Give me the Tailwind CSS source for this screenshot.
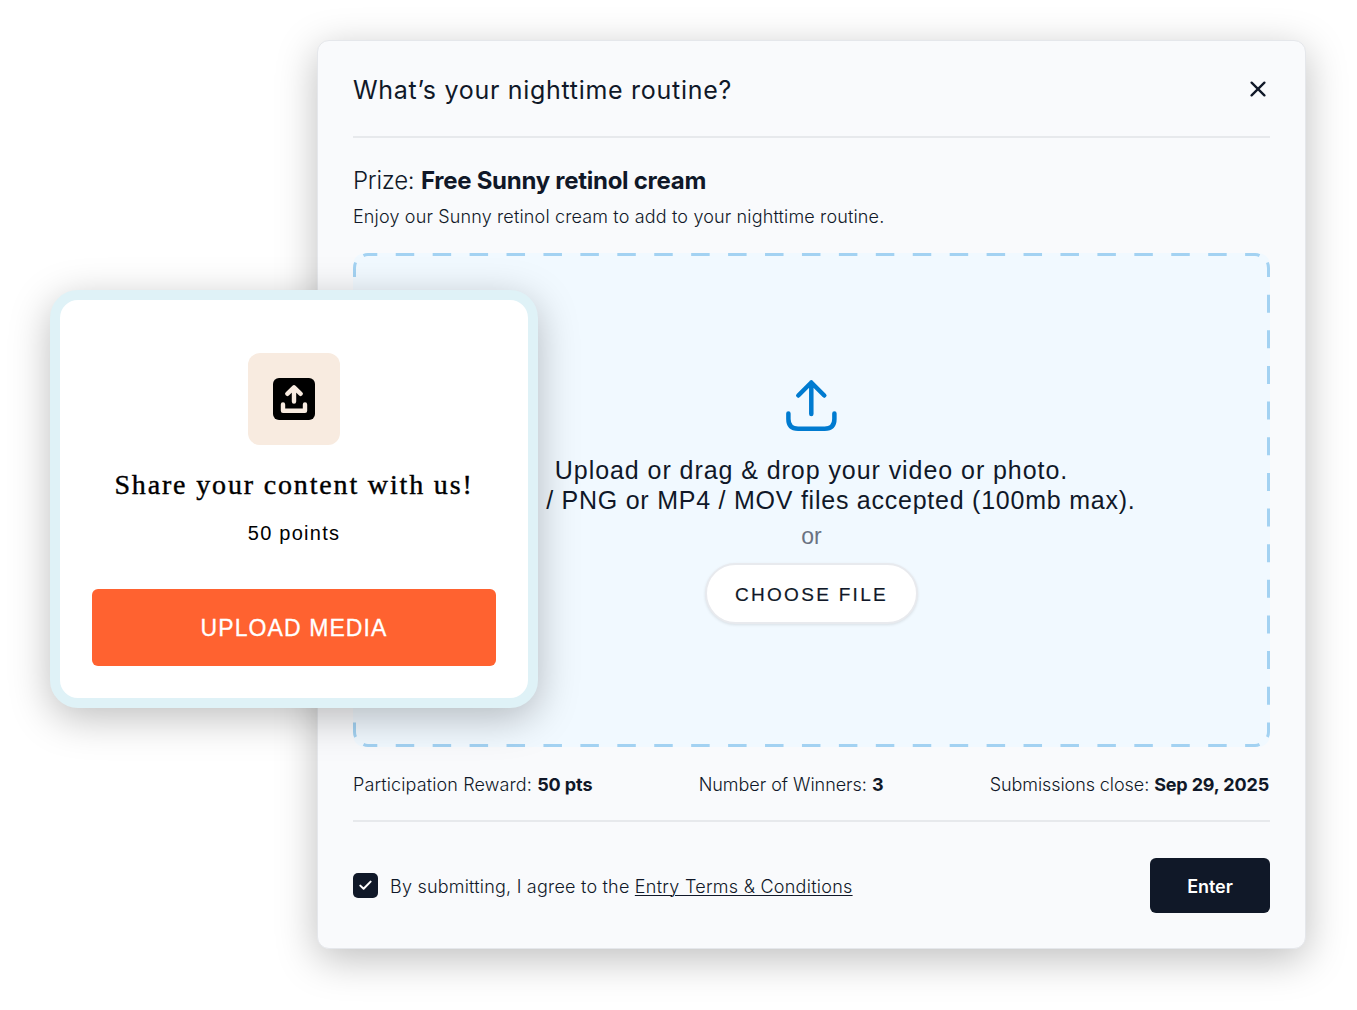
<!doctype html>
<html lang="en">
<head>
    <title>What’s your nighttime routine?</title>
    <meta charset="UTF-8">
    <meta name="viewport" content="width=device-width, initial-scale=1.0">
    <script src="https://cdn.jsdelivr.net/npm/@tailwindcss/browser@4"></script>
</head>
<body class="bg-white overflow-hidden">
<main class="relative w-[1357px] h-[1010px] pt-10 pl-[317px] overflow-hidden text-gray-900 font-['Inter',sans-serif]">

    <!-- Contest modal -->
    <section class="w-[989px] h-[909px] px-[35px] bg-[#f9fafc] border border-gray-200 rounded-xl shadow-[0_10px_40px_rgba(0,0,0,0.26)]">

        <!-- Header -->
        <header class="h-[97px] flex items-center justify-between border-b-2 border-[#e7e9ec]">
            <h1 class="pt-[3px] text-[25px] leading-[30px] tracking-[0.71px]">What’s your nighttime routine?</h1>
            <button class="mr-1 pt-px" aria-label="Close">
                <svg class="block size-4" viewBox="0 0 16 16" fill="none" stroke="currentColor" stroke-width="2.3" stroke-linecap="round">
                    <path d="M1.6 1.6 14.4 14.4M14.4 1.6 1.6 14.4"/>
                </svg>
            </button>
        </header>

        <!-- Prize -->
        <h2 class="mt-7 text-2xl leading-[30px] font-light tracking-[-0.25px]">Prize: <b class="font-bold tracking-[-0.27px]">Free Sunny retinol cream</b></h2>
        <p class="mt-[9px] text-lg leading-6 font-light tracking-[0.15px]">Enjoy our Sunny retinol cream to add to your nighttime routine.</p>

        <!-- Drop zone -->
        <div class="relative mt-6 h-[494px] pt-[125px] flex flex-col items-center rounded-xl bg-[#f1f9ff] font-['Liberation_Sans',sans-serif]">
            <svg class="absolute inset-0 w-[917px] h-[494px]" viewBox="0 0 917 494" fill="none" stroke="#a3d2f2" stroke-width="3">
                <path d="M15 1.5H902" stroke-dasharray="18.5 18.43" stroke-dashoffset="9.2"/>
                <path d="M15 492.5H902" stroke-dasharray="18.5 18.43" stroke-dashoffset="9.2"/>
                <path d="M1.5 41.7V460" stroke-dasharray="18 17.64"/>
                <path d="M915.5 41.7V460" stroke-dasharray="18 17.64"/>
                <path d="M10.5 2.6Q12.5 1.5 15 1.5H20M1.5 24V15Q1.5 12 2.6 9.5"/>
                <path d="M906.5 2.6Q904.5 1.5 902 1.5H896M915.5 24V15Q915.5 12 914.4 9.5"/>
                <path d="M10.5 491.4Q12.5 492.5 15 492.5H20M1.5 469.5V479Q1.5 482 2.6 484"/>
                <path d="M906.5 491.4Q904.5 492.5 902 492.5H896M915.5 469.5V479Q915.5 482 914.4 484"/>
            </svg>
            <svg class="size-14" viewBox="0 0 56 56" fill="none" stroke="#007bd0" stroke-width="4.5" stroke-linecap="round" stroke-linejoin="round">
                <path d="M27.3 36V4.5M14.3 17.5 27.3 4.5 40.3 17.5"/>
                <path d="M4.4 35.5V41Q4.4 50.7 14.1 50.7H40.7Q50.4 50.7 50.4 41V35.5"/>
            </svg>
            <p class="mt-[21px] text-[25px] leading-[30px] tracking-[0.94px] whitespace-nowrap">Upload or drag &amp; drop your video or photo.</p>
            <p class="text-[25px] leading-[30px] tracking-[0.76px] whitespace-nowrap">JPG / PNG or MP4 / MOV files accepted (100mb max).</p>
            <p class="mt-[7px] text-[23px] leading-7 text-gray-500">or</p>
            <button class="mt-[13px] w-[213px] h-[61px] pt-[3px] rounded-full bg-white border-2 border-[#e8eaee] shadow-[0_1px_3px_rgba(0,0,0,0.1)] text-[19px] tracking-[2.3px] [-webkit-text-stroke:0.2px_#111827]">CHOOSE FILE</button>
        </div>

        <!-- Contest details -->
        <div class="mt-[26px] pb-[23px] pr-px flex justify-between border-b-2 border-[#e7e9ec] text-lg leading-6 font-light">
            <p class="tracking-[0.12px]">Participation Reward: <b class="font-bold tracking-[-0.1px]">50 pts</b></p>
            <p class="tracking-[-0.03px]">Number of Winners: <b class="font-bold">3</b></p>
            <p class="tracking-[-0.08px]">Submissions close: <b class="font-bold tracking-[-0.15px]">Sep 29, 2025</b></p>
        </div>

        <!-- Footer -->
        <footer class="mt-9 h-[55px] flex items-center justify-between">
            <label class="flex items-center text-lg leading-6 font-light">
                <span class="size-[25px] mr-3 flex items-center justify-center rounded-[5px] bg-gray-900">
                    <svg class="size-[13px] mr-px" viewBox="0 0 13 13" fill="none" stroke="#fff" stroke-width="2" stroke-linecap="round" stroke-linejoin="round">
                        <path d="M1.3 6.6 4.6 9.8 11.6 2.6"/>
                    </svg>
                </span>
                <span class="pt-0.5 tracking-[0.21px]">By submitting, I agree to the <a href="#" class="underline underline-offset-[2px] decoration-1 tracking-[0.26px]">Entry Terms &amp; Conditions</a></span>
            </label>
            <button class="w-[120px] h-[55px] pt-0.5 rounded-md bg-gray-900 text-white text-lg font-semibold tracking-[-0.1px]">Enter</button>
        </footer>
    </section>

    <!-- Upload card, floats over the modal -->
    <aside class="absolute left-[50px] top-[290px] w-[488px] h-[418px] pt-[53px] px-8 flex flex-col items-center bg-white border-10 border-[#dff2f7] rounded-[28px] shadow-[0_10px_40px_rgba(0,0,0,0.26)] text-black font-['Liberation_Sans',sans-serif]">
        <div class="size-[92px] flex items-center justify-center rounded-xl bg-[#f8ebe0]">
            <svg class="size-[42px]" viewBox="0 0 42 42" fill="none" stroke="#f8ebe0" stroke-width="4.4" stroke-linecap="round" stroke-linejoin="round">
                <rect width="42" height="42" rx="6" fill="#000" stroke="none"/>
                <path d="M21 23.5V9.5M14.3 15.8 21 9.3 27.7 15.8"/>
                <path d="M10 26.5V32.7H32V26.5"/>
            </svg>
        </div>
        <h3 class="mt-6 text-[28px] leading-8 tracking-[1.84px] whitespace-nowrap font-['Liberation_Serif',serif] [-webkit-text-stroke:0.4px_#000]">Share your content with us!</h3>
        <p class="mt-5 text-xl leading-6 tracking-[1.25px]">50 points</p>
        <button class="mt-11 w-[404px] h-[77px] pt-0.5 rounded-md bg-[#ff6230] text-white text-[23px] tracking-[1.1px] [-webkit-text-stroke:0.3px_#fff]">UPLOAD MEDIA</button>
    </aside>
</main>
</body>
</html>
